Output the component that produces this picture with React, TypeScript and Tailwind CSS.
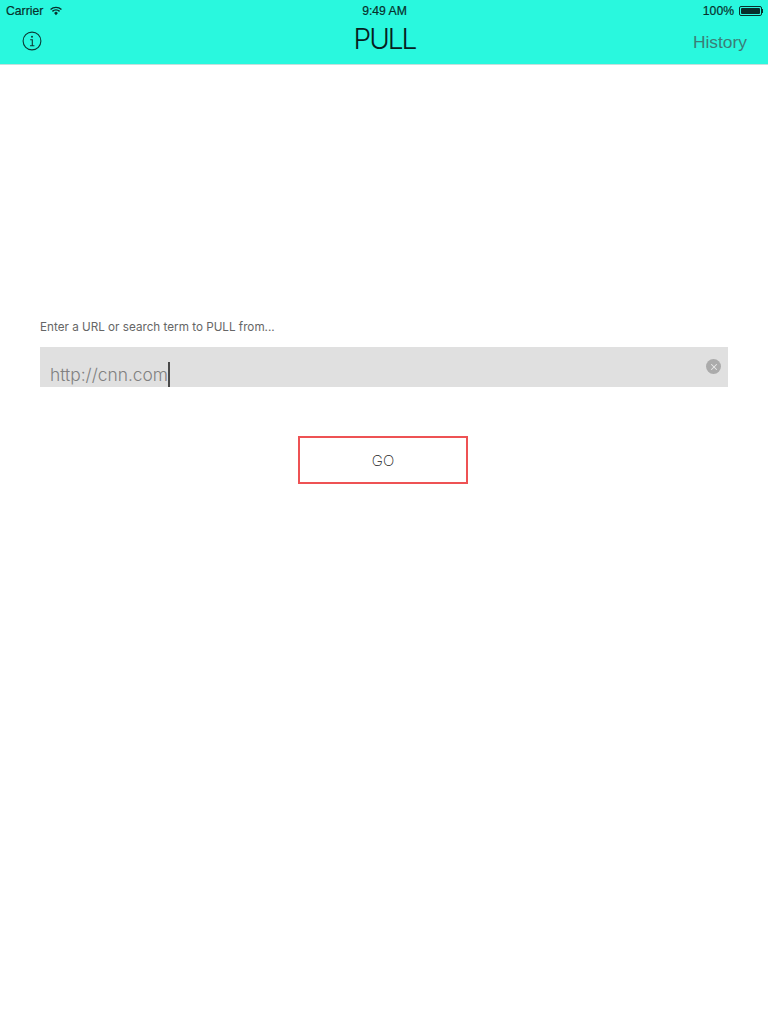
import { X } from 'lucide-react';

function WifiGlyph() {
  return (
    <svg width="12" height="10" viewBox="0 0 13 10" className="text-[#07302c]" fill="none">
      <path d="M0.6 3.4C3.9 0.3 9.1 0.3 12.4 3.4" stroke="currentColor" strokeWidth="1.5" />
      <path d="M2.6 5.4C4.8 3.4 8.2 3.4 10.4 5.4" stroke="currentColor" strokeWidth="1.5" />
      <path d="M4.4 7.2L6.5 5.6L8.6 7.2L6.5 9.6Z" fill="currentColor" />
    </svg>
  );
}

function BatteryGlyph() {
  return (
    <div className="flex items-center">
      <div className="w-[23px] h-[10px] border border-[#07302c] rounded-[2px] p-[1px]">
        <div className="w-full h-full bg-[#07302c] rounded-[1px]" />
      </div>
      <div className="w-[1px] h-[4px] bg-[#07302c]" />
    </div>
  );
}

function InfoIcon() {
  return (
    <svg width="20" height="20" viewBox="0 0 20 20" fill="none" className="text-[#0c3a36]">
      <circle cx="10" cy="10" r="8.9" stroke="currentColor" strokeWidth="1.1" />
      <circle cx="10" cy="5.8" r="1" fill="currentColor" />
      <path d="M8.2 8.7H10.3V14.6M8 14.8H12.4" stroke="currentColor" strokeWidth="1.1" />
    </svg>
  );
}

export default function App() {
  return (
    <div className="w-[768px] h-[1024px] bg-white font-['Inter',sans-serif] overflow-hidden">
      <header className="h-[65px] bg-[#29f8de] border-b border-[#c4e0dc]">
        <div className="h-[22px] flex items-center pl-[6px] pr-[5px] font-['Liberation_Sans',sans-serif] text-[12.2px] text-[#07302c] [-webkit-text-stroke:0.2px_#07302c]">
          <div className="flex-1 flex items-center gap-[7px]">
            <span>Carrier</span>
            <WifiGlyph />
          </div>
          <span>9:49 AM</span>
          <div className="flex-1 flex items-center justify-end gap-[5px]">
            <span>100%</span>
            <BatteryGlyph />
          </div>
        </div>
        <div className="h-[42px] flex items-center pl-[22px] pr-[21px] pb-[4px]">
          <div className="flex-1">
            <InfoIcon />
          </div>
          <h1 className="font-light text-[28px] leading-none tracking-[-2px] text-[#06201e] -mt-[5px]">PULL</h1>
          <div className="flex-1 flex justify-end">
            <span className="font-['Liberation_Sans',sans-serif] text-[17.4px] text-[#3b7d77] mt-[3px]">History</span>
          </div>
        </div>
      </header>
      <main className="px-[40px] pt-[255px]">
        <p className="text-[11.7px] leading-[14px] text-[#666666]">Enter a URL or search term to PULL from...</p>
        <div className="mt-[13px] h-[40px] bg-[#e0e0e0] flex items-end justify-between pl-[10px] pr-[7px]">
          <div className="flex items-end h-[26px]">
            <span className="text-[17.4px] leading-[26px] font-light text-[#808080] translate-y-[1px]">http://cnn.com</span>
            <div className="w-[2px] h-[25px] bg-[#4a4a4a]" />
          </div>
          <div className="w-[15px] h-[15px] rounded-full bg-[#ababab] flex items-center justify-center mb-[13px]">
            <X className="w-[10px] h-[10px] text-[#e8e8e8]" strokeWidth={2.5} />
          </div>
        </div>
        <div className="flex justify-center mt-[49px] pr-[2px]">
          <button className="w-[170px] h-[48px] border-2 border-[#ee5254] pt-[2px] text-[15px] font-extralight text-[#222222]">GO</button>
        </div>
      </main>
    </div>
  );
}
